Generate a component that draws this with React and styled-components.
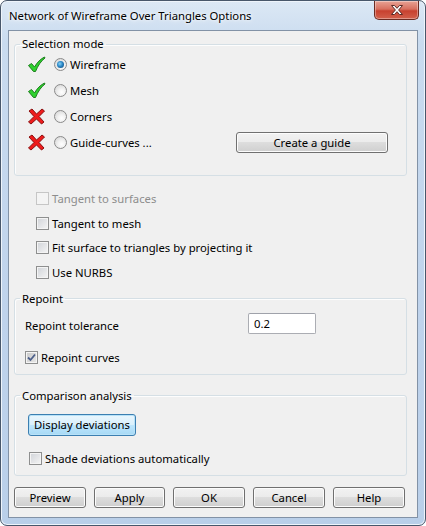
import React from 'react'
import styled, { createGlobalStyle } from 'styled-components'

const GlobalStyle = createGlobalStyle`
  html, body {
    margin: 0;
    padding: 0;
    background: #ffffff;
  }
  body {
    font-family: "Noto Sans", "Open Sans", sans-serif;
    font-size: 11.3px;
    color: #000;
  }
`

function GreenCheck() {
  return (
    <svg width="19" height="17" viewBox="0 0 19 17">
      <path
        d="M1.5 9.5 L4.5 7.5 L7.5 11 C10 6.5 13.5 3 17.5 1 L18 2 C14 5 11 9.5 8.5 15.5 L6.5 15.5 Z"
        fill="#2ed12e"
        stroke="#1f7d1f"
        strokeWidth="1"
        strokeLinejoin="round"
      />
    </svg>
  )
}

function RedCross() {
  return (
    <svg width="19" height="17" viewBox="0 0 19 17">
      <path
        d="M2 3 L5 1 L9.5 6 L15 1 L17.5 3 L12 8.5 L17 14 L14.5 16 L9.5 11 L4 16 L1.5 14 L7 8.5 Z"
        fill="#ee1c1c"
        stroke="#8a1010"
        strokeWidth="1"
        strokeLinejoin="round"
      />
    </svg>
  )
}

function TickMark() {
  return (
    <svg width="9" height="9" viewBox="0 0 9 9">
      <path d="M1 4.5 L3.5 7 L8 1.5" fill="none" stroke="#4c5f8a" strokeWidth="1.8" />
    </svg>
  )
}

export default function App() {
  return (
    <>
      <GlobalStyle />
      <Window>
        <TitleBar>
          <Title>Network of Wireframe Over Triangles Options</Title>
          <CloseButton>
            <svg width="14" height="12" viewBox="0 0 14 12">
              <path
                d="M1.5 1.5 L4.5 1.5 L7 4.3 L9.5 1.5 L12.5 1.5 L8.6 6 L12.5 10.5 L9.5 10.5 L7 7.7 L4.5 10.5 L1.5 10.5 L5.4 6 Z"
                fill="#ffffff"
                stroke="#5a2a25"
                strokeWidth="1"
                strokeLinejoin="round"
              />
            </svg>
          </CloseButton>
        </TitleBar>

        <Client>
          <Group $mt={5} $pb={20}>
            <Legend>Selection mode</Legend>
            <ModeList>
              <ModeRow>
                <IconCell><GreenCheck /></IconCell>
                <Radio $checked />
                <Label>Wireframe</Label>
              </ModeRow>
              <ModeRow>
                <IconCell><GreenCheck /></IconCell>
                <Radio />
                <Label>Mesh</Label>
              </ModeRow>
              <ModeRow>
                <IconCell><RedCross /></IconCell>
                <Radio />
                <Label>Corners</Label>
              </ModeRow>
              <ModeRow>
                <IconCell><RedCross /></IconCell>
                <Radio />
                <Label>Guide-curves ...</Label>
                <Spacer />
                <Button $w={152}>Create a guide</Button>
              </ModeRow>
            </ModeList>
          </Group>

          <CheckList>
            <CheckRow $disabled>
              <Box $disabled />
              <Label>Tangent to surfaces</Label>
            </CheckRow>
            <CheckRow>
              <Box />
              <Label>Tangent to mesh</Label>
            </CheckRow>
            <CheckRow>
              <Box />
              <Label>Fit surface to triangles by projecting it</Label>
            </CheckRow>
            <CheckRow>
              <Box />
              <Label>Use NURBS</Label>
            </CheckRow>
          </CheckList>

          <Group $mt={6} $pb={4}>
            <Legend>Repoint</Legend>
            <ToleranceRow>
              <FieldLabel>Repoint tolerance</FieldLabel>
              <Input defaultValue="0.2" />
            </ToleranceRow>
            <InnerCheck $pl={10} $mt={12}>
              <Box $checked><TickMark /></Box>
              <Label>Repoint curves</Label>
            </InnerCheck>
          </Group>

          <Group $mt={13} $pb={4}>
            <Legend>Comparison analysis</Legend>
            <ButtonLine>
              <Button $w={108} $h={22} $default>Display deviations</Button>
            </ButtonLine>
            <InnerCheck $pl={14} $mt={11}>
              <Box />
              <Label>Shade deviations automatically</Label>
            </InnerCheck>
          </Group>

          <Footer>
            <Button $w={72}>Preview</Button>
            <Button $w={71}>Apply</Button>
            <Button $w={72}>OK</Button>
            <Button $w={72}>Cancel</Button>
            <Button $w={72}>Help</Button>
          </Footer>
        </Client>
      </Window>
    </>
  )
}

const Window = styled.div`
  width: 426px;
  height: 526px;
  box-sizing: border-box;
  border: 1px solid #48576b;
  border-radius: 7px;
  background: linear-gradient(180deg, #dce8f5 0%, #c9dbef 8%, #bfd3ec 60%, #b9cfe9 100%);
  box-shadow: inset 0 0 0 1px #eef4fb;
  display: flex;
  flex-direction: column;
  overflow: hidden;
`

const TitleBar = styled.div`
  flex: none;
  height: 29px;
  display: flex;
  align-items: flex-start;
  justify-content: space-between;
  padding: 0 6px 0 8px;
`

const Title = styled.div`
  margin-top: 7px;
  font-size: 11.3px;
  color: #000;
  text-shadow: 0 0 6px #ffffff, 0 0 3px #ffffff;
`

const CloseButton = styled.div`
  width: 45px;
  height: 19px;
  box-sizing: border-box;
  border: 1px solid #6b2b22;
  border-top: none;
  border-radius: 0 0 5px 5px;
  background: linear-gradient(180deg, #e8a395 0%, #d8705f 45%, #c7412f 55%, #d2604b 100%);
  box-shadow: inset 0 0 0 1px rgba(255, 255, 255, 0.35);
  display: flex;
  align-items: center;
  justify-content: center;
`

const Client = styled.div`
  flex: 1;
  min-height: 0;
  margin: 0 7px 7px 7px;
  border: 1px solid #8292a6;
  background: #f0f0f0;
  display: flex;
  flex-direction: column;
  padding: 0 10px 0 5px;
`

const Group = styled.fieldset`
  flex: none;
  margin: ${p => p.$mt}px 0 0 0;
  padding: 0 0 ${p => p.$pb}px 0;
  border: 1px solid #d5dfe5;
  border-radius: 3px;
  min-inline-size: 0;
  box-shadow: inset 1px 1px 0 #fdfdfd;
`

const Legend = styled.legend`
  margin-left: 5px;
  padding: 0 2px;
  line-height: 16px;
  color: #000;
`

const ModeList = styled.div`
  display: flex;
  flex-direction: column;
  margin-top: -1px;
  padding: 0 18px 0 12px;
`

const ModeRow = styled.div`
  height: 26px;
  display: flex;
  align-items: center;
`

const IconCell = styled.div`
  width: 19px;
  height: 17px;
  margin-right: 8px;
  display: flex;
`

const Spacer = styled.div`
  flex: 1;
`

const Radio = styled.span`
  width: 13px;
  height: 13px;
  box-sizing: border-box;
  border-radius: 50%;
  border: 1px solid #8a8a8a;
  background: radial-gradient(circle at 60% 65%, #ffffff 0%, #f2f2f2 35%, #cfcfcf 100%);
  position: relative;
  flex: none;

  &::after {
    content: '';
    display: ${p => (p.$checked ? 'block' : 'none')};
    position: absolute;
    left: 2px;
    top: 2px;
    width: 7px;
    height: 7px;
    border-radius: 50%;
    background: radial-gradient(circle at 40% 40%, #8ad3f7 0%, #2a87c6 45%, #0d3d6b 100%);
  }
`

const Label = styled.span`
  margin-left: 3px;
  white-space: nowrap;
`

const CheckList = styled.div`
  flex: none;
  display: flex;
  flex-direction: column;
  margin-top: 10px;
  padding-left: 22px;
`

const CheckRow = styled.div`
  height: 24.7px;
  display: flex;
  align-items: center;
  color: ${p => (p.$disabled ? '#8d8d8d' : '#000')};
`

const Box = styled.span`
  width: 13px;
  height: 13px;
  box-sizing: border-box;
  flex: none;
  border: 1px solid ${p => (p.$disabled ? '#c6c6c6' : '#8e8f8f')};
  background: ${p =>
    p.$disabled
      ? '#f4f4f4'
      : p.$checked
        ? 'linear-gradient(135deg, #c9c9c9 0%, #e8e8e8 100%)'
        : 'linear-gradient(135deg, #d0d3d8 0%, #f5f5f5 100%)'};
  box-shadow: inset 0 0 0 1px #f4f4f4;
  display: flex;
  align-items: center;
  justify-content: center;
`

const ToleranceRow = styled.div`
  display: flex;
  align-items: flex-start;
  padding: 6px 0 0 10px;
`

const FieldLabel = styled.span`
  width: 223px;
  margin-top: 5px;
`

const Input = styled.input`
  width: 68px;
  height: 21px;
  box-sizing: border-box;
  border: 1px solid #abadb3;
  border-top-color: #9fa2aa;
  border-radius: 2px;
  background: #fff;
  padding: 0 5px;
  font-family: inherit;
  font-size: 11.3px;
  color: #000;
  outline: none;
`

const InnerCheck = styled.div`
  display: flex;
  align-items: center;
  height: 24px;
  margin-top: ${p => p.$mt}px;
  padding-left: ${p => p.$pl}px;
`

const ButtonLine = styled.div`
  display: flex;
  padding: 10px 0 0 13px;
`

const Button = styled.button`
  width: ${p => p.$w}px;
  height: ${p => p.$h || 21}px;
  box-sizing: border-box;
  padding: 0;
  font-family: inherit;
  font-size: 11.3px;
  color: #000;
  border: 1px solid ${p => (p.$default ? '#3c7fb1' : '#707070')};
  border-radius: 3px;
  background: ${p =>
    p.$default
      ? 'linear-gradient(180deg, #eaf6fd 0%, #d9f0fc 50%, #bee6fd 50%, #a7d9f5 100%)'
      : 'linear-gradient(180deg, #f2f2f2 0%, #ebebeb 50%, #dddddd 50%, #cfcfcf 100%)'};
  box-shadow: inset 0 0 0 1px ${p => (p.$default ? '#b8e2f8' : '#fcfcfc')};
  flex: none;
`

const Footer = styled.div`
  flex: none;
  display: flex;
  justify-content: space-between;
  margin-top: 11px;
  padding-right: 2px;
`
